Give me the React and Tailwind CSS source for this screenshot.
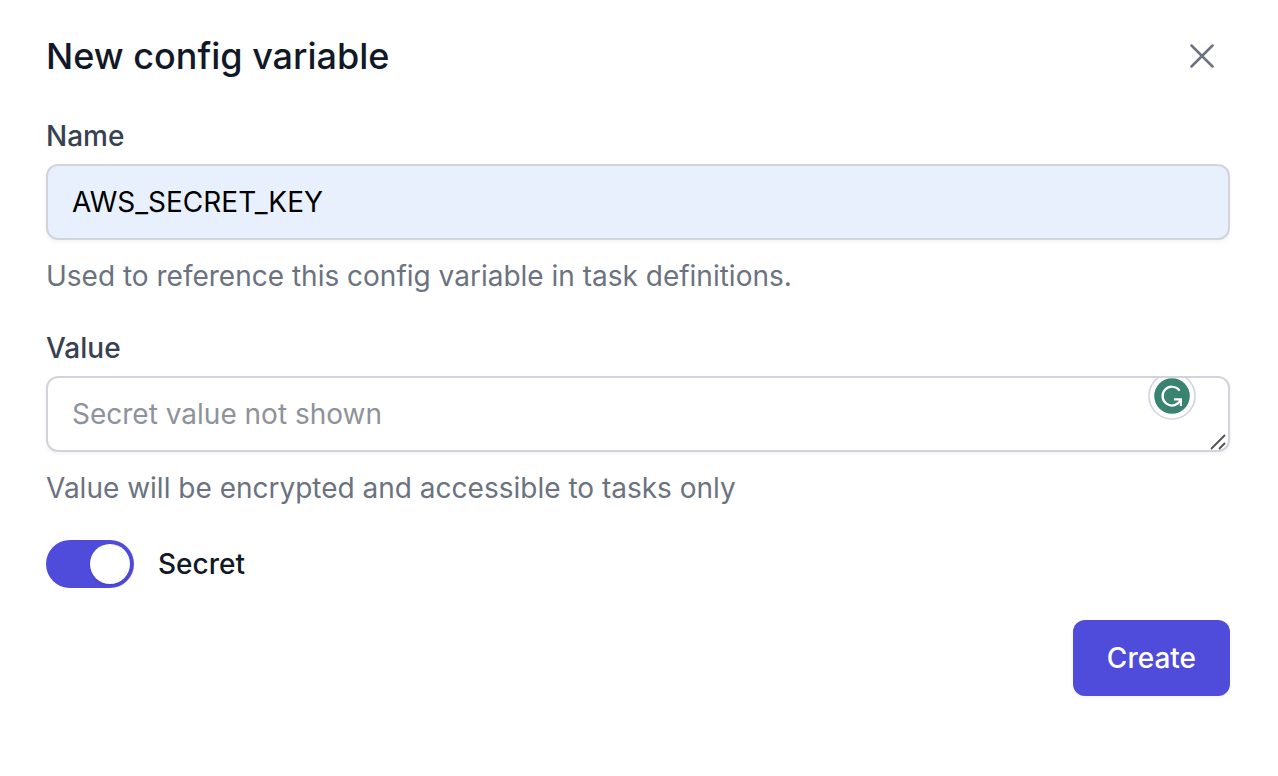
import { useState } from "react";

function Field({ id, label, help, children }) {
  return (
    <div className="flex flex-col">
      <label htmlFor={id} className="text-[28px] leading-10 font-medium text-[#374151]">
        {label}
      </label>
      <div className="relative mt-2 flex">{children}</div>
      <p id={`${id}-help`} className="mt-4 text-[28px] leading-10 text-[#6b7280]">
        {help}
      </p>
    </div>
  );
}

const control =
  "h-19 w-full rounded-xl border-2 border-[#d1d5db] px-6 py-4 text-[28px] leading-10 shadow-[0_2px_4px_rgba(0,0,0,0.05)] outline-none";

export default function App() {
  const [name, setName] = useState("AWS_SECRET_KEY");
  const [value, setValue] = useState("");
  const [secret, setSecret] = useState(true);

  return (
    <main className="min-h-screen bg-white pt-7 pr-12 pb-20 pl-[46px] font-['Inter',sans-serif]">
      <header className="flex items-center justify-between pr-4">
        <h1 className="text-4xl leading-14 font-medium text-[#111827]">New config variable</h1>
        <button type="button" aria-label="Close" className="text-[#6b7280]">
          <svg className="size-6" viewBox="0 0 24 24" fill="none" stroke="currentColor" strokeWidth="2.5" strokeLinecap="round">
            <path d="M1.5 1.5 22.5 22.5M22.5 1.5 1.5 22.5" />
          </svg>
        </button>
      </header>

      <form className="mt-8 flex flex-col" onSubmit={(e) => e.preventDefault()}>
        <div className="flex flex-col gap-8">
          <Field id="name" label="Name" help="Used to reference this config variable in task definitions.">
            <input
              id="name"
              type="text"
              aria-describedby="name-help"
              value={name}
              onChange={(e) => setName(e.target.value)}
              className={`${control} bg-[#e8f0fe] text-black`}
            />
          </Field>

          <Field id="value" label="Value" help="Value will be encrypted and accessible to tasks only">
            <textarea
              id="value"
              rows={1}
              aria-describedby="value-help"
              placeholder="Secret value not shown"
              value={value}
              onChange={(e) => setValue(e.target.value)}
              className={`${control} resize-none overflow-hidden bg-white text-[#111827] placeholder:text-[#8e929c]`}
            />
            <svg className="absolute top-0.5 right-8 h-11 w-13 overflow-hidden" viewBox="0 2 52 44" aria-hidden="true">
              <circle cx="26" cy="20" r="23" fill="#fff" stroke="#d3d6e0" strokeWidth="1.7" />
              <circle cx="26" cy="20" r="17.8" fill="#3a8271" />
              <path
                d="M33.6 14.6A9.4 9.4 0 1 0 34.6 23.9M28 23.4H34.9V30"
                fill="none"
                stroke="#fff"
                strokeWidth="2.2"
              />
            </svg>
            <svg className="absolute right-1 bottom-0.5 size-4" viewBox="0 0 16 16" fill="none" stroke="#505050" strokeWidth="1.8" aria-hidden="true">
              <path d="M1 15 15 1M9 15 15 9" />
            </svg>
          </Field>
        </div>

        <div className="mt-8 flex items-center gap-6">
          <button
            type="button"
            role="switch"
            aria-checked={secret}
            aria-labelledby="secret-label"
            onClick={() => setSecret(!secret)}
            className={`flex h-12 w-22 items-center rounded-full p-1 ${secret ? "justify-end bg-[#4f4bdb]" : "justify-start bg-gray-200"}`}
          >
            <span className="size-10 rounded-full bg-white shadow-sm" />
          </button>
          <span id="secret-label" className="text-[28px] leading-10 font-medium text-[#111827]">
            Secret
          </span>
        </div>

        <button
          type="submit"
          className="mt-8 h-19 self-end rounded-xl bg-[#4f4bdb] px-[34px] text-[28px] leading-10 font-medium text-white shadow-[0_2px_4px_rgba(0,0,0,0.05)]"
        >
          Create
        </button>
      </form>
    </main>
  );
}
